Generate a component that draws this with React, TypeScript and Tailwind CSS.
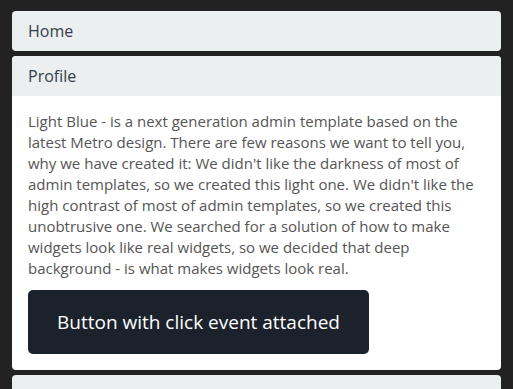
const panels = [
  { id: "home", title: "Home" },
  { id: "profile", title: "Profile" },
  // only the top edge of the next panel shows in the frame
  { id: "next", title: "" },
];

const App = () => {
  return (
    <div
      className="min-h-screen bg-[#222222] px-3 pt-[11px]"
      style={{ fontFamily: '"Open Sans", "Liberation Sans", sans-serif' }}
    >
      <div className="flex flex-col gap-[5px]">
        {panels.map((panel) => (
          <div key={panel.id} className="rounded-[4px] overflow-hidden bg-white">
            <div className="h-10 flex items-center px-4 bg-[#eceff0] text-[16px] text-[#323e49]">
              {panel.title}
            </div>
            {panel.id === "profile" && (
              <div className="px-4 pt-[15px] pb-4">
                <p className="text-[15px] leading-[21px] text-[#555555] mb-[11px]">
                  Light Blue - is a next generation admin template based on the latest Metro design. There
                  are few reasons we want to tell you, why we have created it: We didn't like the darkness of
                  most of admin templates, so we created this light one. We didn't like the high contrast of
                  most of admin templates, so we created this unobtrusive one. We searched for a solution of
                  how to make widgets look like real widgets, so we decided that deep background - is what
                  makes widgets look real.
                </p>
                <button
                  type="button"
                  className="w-[341px] h-16 rounded-[5px] bg-[#1b222b] text-white text-[19px]"
                  onClick={() => alert("clicked")}
                >
                  Button with click event attached
                </button>
              </div>
            )}
          </div>
        ))}
      </div>
    </div>
  );
};

export default App;
